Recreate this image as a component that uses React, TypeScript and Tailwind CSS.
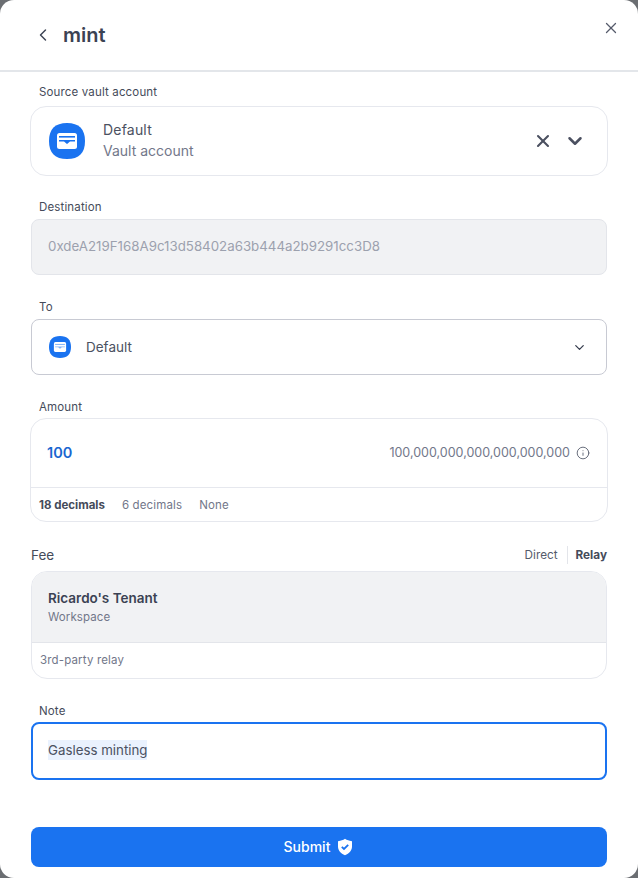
import React from 'react';
import { ChevronDown, ChevronLeft, Info, X } from 'lucide-react';

const VaultIcon: React.FC<{ large?: boolean }> = ({ large }) => (
  <svg width={large ? 36 : 22} height={large ? 36 : 22} viewBox="0 0 36 36" className="shrink-0">
    <path d="M18 0C30 0 36 6 36 18S30 36 18 36 0 30 0 18 6 0 18 0Z" fill="#1a73f0" />
    <rect x="8" y="10" width="20" height="16" rx="2.5" fill="#fff" />
    <rect x="10" y="13" width="16" height="1.6" fill="#1a73f0" opacity={large ? 1 : 0.55} />
    <path d="M10 17h16v1.6h-5l-3 2.4-3-2.4h-5z" fill="#1a73f0" opacity={large ? 1 : 0.55} />
  </svg>
);

const Label: React.FC<{ children: React.ReactNode }> = ({ children }) => (
  <div className="h-4 px-[9px] text-[11.5px] leading-[17px] tracking-[0.15px] text-[#454b5a]">{children}</div>
);

export default function App() {
  return (
    <div className="h-[878px] w-[638px] bg-[#6b6e72] font-['Inter',sans-serif]">
      <div className="flex h-full flex-col rounded-[14px] bg-white">
        <div className="relative flex h-[72px] shrink-0 items-center border-b-2 border-[#e3e6ea] pb-[1px] pl-[33px]">
          <ChevronLeft size={20} strokeWidth={1.75} className="text-[#3d4454]" />
          <h1 className="ml-[10px] text-xl font-semibold text-[#3b4253]">mint</h1>
          <X size={18} strokeWidth={1.75} className="absolute right-[18px] top-[19px] text-[#555b6b]" />
        </div>

        <div className="flex flex-1 flex-col px-[30px] pt-3">
          <Label>Source vault account</Label>
          <div className="mt-[6px] flex h-[70px] items-center rounded-[16px] border border-[#e6e8ee] pl-[18px] pr-[21px]">
            <VaultIcon large />
            <div className="ml-[18px] flex-1 pb-[3px]">
              <div className="text-sm leading-[21px] tracking-[0.2px] text-[#4b5161]">Default</div>
              <div className="text-sm leading-[21px] text-[#72778a]">Vault account</div>
            </div>
            <X size={20} strokeWidth={2.5} className="text-[#4b5060]" />
            <ChevronDown size={22} strokeWidth={2.75} className="ml-[11px] text-[#4b5060]" />
          </div>

          <div className="mt-[23px]"><Label>Destination</Label></div>
          <div className="mx-px mt-[4px] flex h-14 items-center rounded-lg border border-[#e3e5ea] bg-[#f1f2f4] px-4 text-[13.3px] text-[#9ca1ae]">
            0xdeA219F168A9c13d58402a63b444a2b9291cc3D8
          </div>

          <div className="mt-6"><Label>To</Label></div>
          <div className="mx-px mt-1 flex h-14 items-center rounded-lg border border-[#c8cad3] pl-[17px] pr-[19px]">
            <VaultIcon />
            <span className="ml-[15px] flex-1 text-[13.5px] text-[#4b5161]">Default</span>
            <ChevronDown size={15} strokeWidth={2} className="text-[#353c4d]" />
          </div>

          <div className="mt-6"><Label>Amount</Label></div>
          <div className="mt-[3px] h-[104px] rounded-[16px] border border-[#e6e8ee]">
            <div className="flex h-[69px] items-center border-b border-[#e6e8ee] pl-4 pr-[17px]">
              <span className="flex-1 text-[14.5px] font-semibold text-[#1a66d0]">100</span>
              <span className="text-[12.5px] text-[#72778a]">100,000,000,000,000,000,000</span>
              <Info size={14} strokeWidth={1.5} className="ml-[6px] text-[#555b6b]" />
            </div>
            <div className="flex h-[33px] items-center gap-[17px] px-2 pt-[2px] text-[11.5px]">
              <span className="font-bold text-[#454b5a]">18 decimals</span>
              <span className="tracking-[0.15px] text-[#72778a]">6 decimals</span>
              <span className="tracking-[0.15px] text-[#72778a]">None</span>
            </div>
          </div>

          <div className="mx-px mt-[24px] flex h-[18px] items-center justify-between">
            <span className="text-[13.5px] text-[#454b5a]">Fee</span>
            <div className="flex items-center text-[11.75px]">
              <span className="pr-[9px] pt-px text-[#555b6b]">Direct</span>
              <span className="border-l border-[#e3e5ea] pl-2 font-bold leading-[18px] text-[#454b5a]">Relay</span>
            </div>
          </div>
          <div className="mx-px mt-[7px] h-[108px] overflow-hidden rounded-[16px] border border-[#e6e8ee]">
            <div className="flex h-[71px] flex-col justify-center border-b border-[#e3e5ea] bg-[#f1f2f4] px-4">
              <div className="text-[13.5px] font-semibold leading-5 text-[#3b4253]">Ricardo's Tenant</div>
              <div className="text-[11.5px] leading-[18px] tracking-[0.1px] text-[#72778a]">Workspace</div>
            </div>
            <div className="flex h-9 items-center px-2 text-[11.5px] tracking-[0.15px] text-[#72778a]">3rd-party relay</div>
          </div>

          <div className="mt-6"><Label>Note</Label></div>
          <div className="mx-px mt-[3px] flex h-[58px] items-center rounded-lg border-2 border-[#1a73f0] px-[15px] pb-[2px]">
            <span className="bg-[#eaf2fe] text-[13.3px] leading-5 text-[#4b5161]">Gasless minting</span>
          </div>

          <button className="mx-px mt-[47px] flex h-10 items-center justify-center gap-[6px] rounded-lg bg-[#1a73f0] text-sm font-medium text-white">
            Submit
            <svg width="18" height="18" viewBox="0 0 18 18">
              <path d="M9 .8c2 1.4 4 2.1 7 2.4v5.2c0 4-2.8 7-7 8.800-4.200-1.800-7-4.800-7-8.800V3.200C5 2.900 7 2.200 9 .8Z" fill="#fff" />
              <path d="M5.800 8.800 8 11l4.200-4.200" fill="none" stroke="#1a73f0" strokeWidth="1.800" />
            </svg>
          </button>
        </div>
      </div>
    </div>
  );
}
